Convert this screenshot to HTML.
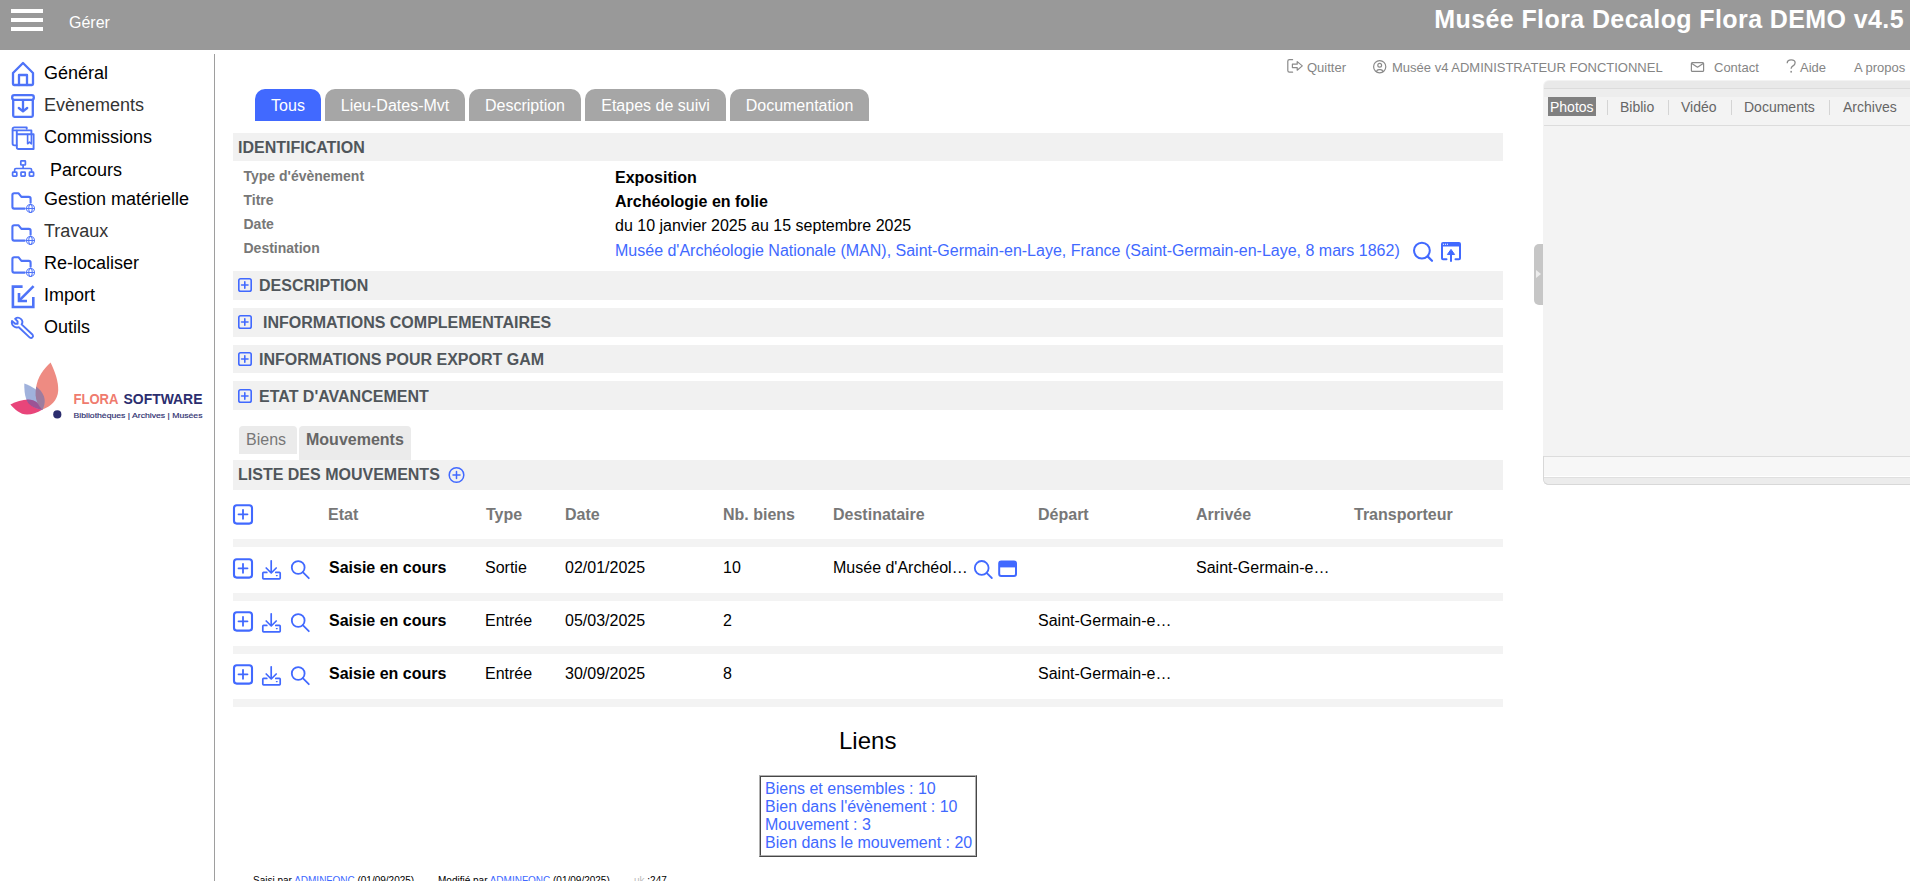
<!DOCTYPE html>
<html><head><meta charset="utf-8">
<style>
*{margin:0;padding:0;box-sizing:border-box}
html,body{width:1910px;height:881px;overflow:hidden;background:#fff;font-family:"Liberation Sans",sans-serif;position:relative}
.a{position:absolute;white-space:nowrap;line-height:1}
#hdr{position:absolute;left:0;top:0;width:1910px;height:50px;background:#999}
.bar{position:absolute;left:11px;width:32px;height:4px;background:#fff}
#gerer{left:69px;top:15px;font-size:16px;color:#fff}
#title{right:6px;top:7px;font-size:25px;font-weight:bold;color:#fff;letter-spacing:0.4px}
#vline{position:absolute;left:214px;top:54px;width:1px;height:827px;background:#9e9e9e}
.nav{position:absolute;left:44px;font-size:18px;line-height:1;color:#000;white-space:nowrap}
.toplink{position:absolute;top:61px;font-size:13px;line-height:1;color:#858585;white-space:nowrap}
.tab{position:absolute;top:89px;height:32px;border-radius:10px 10px 0 0;background:#a6a6a6;color:#fff;font-size:16px;line-height:32px;padding-top:1px;text-align:center;white-space:nowrap}
.sect{position:absolute;left:233px;width:1270px;background:#f1f1f1}
.st{position:absolute;font-size:16px;font-weight:bold;color:#50565b;line-height:1;white-space:nowrap}
.lbl{position:absolute;left:243.5px;font-size:14px;font-weight:bold;color:#777;line-height:1;white-space:nowrap}
.val{position:absolute;left:615px;font-size:16px;color:#000;line-height:1;white-space:nowrap}
.sep{position:absolute;left:233px;width:1270px;height:8px;background:#f3f3f3}
.th{position:absolute;top:507px;font-size:16px;font-weight:bold;color:#777;line-height:1;white-space:nowrap}
.td{position:absolute;font-size:16px;color:#000;line-height:1;white-space:nowrap}
.rp{position:absolute;font-size:14px;line-height:1;color:#666;white-space:nowrap}
.rsep{position:absolute;top:100px;width:1px;height:15px;background:#d4d4d4}
.lk{position:absolute;left:765px;font-size:16px;line-height:1;color:#4169ff;white-space:nowrap}
.ft{position:absolute;top:876px;font-size:10px;line-height:1;color:#000;white-space:nowrap}
.ft b{font-weight:normal;color:#4169ff}
</style></head><body>
<div id="hdr">
  <div class="bar" style="top:9px"></div>
  <div class="bar" style="top:18px"></div>
  <div class="bar" style="top:27px"></div>
  <div class="a" id="gerer">Gérer</div>
  <div class="a" id="title">Musée Flora Decalog Flora DEMO v4.5</div>
</div>
<div id="vline"></div>

<!-- sidebar -->
<div class="nav" style="top:64px">Général</div>
<div class="nav" style="top:96px;color:#333">Evènements</div>
<div class="nav" style="top:128px">Commissions</div>
<div class="nav" style="top:161px;left:50px">Parcours</div>
<div class="nav" style="top:190px">Gestion matérielle</div>
<div class="nav" style="top:222px;color:#333">Travaux</div>
<div class="nav" style="top:254px">Re-localiser</div>
<div class="nav" style="top:286px">Import</div>
<div class="nav" style="top:318px">Outils</div>

<!-- top links -->
<div class="toplink" style="left:1307px">Quitter</div>
<div class="toplink" style="left:1392px">Musée v4 ADMINISTRATEUR FONCTIONNEL</div>
<div class="toplink" style="left:1714px">Contact</div>
<div class="toplink" style="left:1800px">Aide</div>
<div class="toplink" style="left:1854px">A propos</div>

<!-- right panel -->
<div style="position:absolute;left:1543px;top:80px;width:380px;height:405px;background:#f3f3f3;border-bottom:1px solid #d8d8d8;border-radius:6px 0 0 6px"></div>
<div style="position:absolute;left:1543px;top:456px;width:12px;height:29px;border-left:1px solid #d8d8d8;border-bottom:1px solid #d8d8d8;border-radius:0 0 0 6px"></div>
<div style="position:absolute;left:1544px;top:81px;width:366px;height:7px;background:#e9e9e9;border-radius:5px 0 0 0"></div>
<div style="position:absolute;left:1544px;top:88px;width:366px;height:9px;background:#ededed;border-top:1px solid #dcdcdc"></div>
<div style="position:absolute;left:1544px;top:125px;width:366px;height:1px;background:#dcdcdc"></div>
<div style="position:absolute;left:1544px;top:456px;width:366px;height:20px;background:#f7f7f7;border-top:1px solid #dcdcdc"></div>
<div style="position:absolute;left:1544px;top:476px;width:366px;height:1px;background:#fff"></div>
<div style="position:absolute;left:1544px;top:477px;width:366px;height:7px;background:#ececec;border-top:1px solid #e0e0e0;border-radius:0 0 0 5px"></div>
<div style="position:absolute;left:1548px;top:97px;width:48px;height:19px;background:#808080"></div>
<div class="rp" style="left:1550px;top:100px;color:#fff">Photos</div>
<div class="rsep" style="left:1607px"></div>
<div class="rp" style="left:1620px;top:100px">Biblio</div>
<div class="rsep" style="left:1668px"></div>
<div class="rp" style="left:1681px;top:100px">Vidéo</div>
<div class="rsep" style="left:1731px"></div>
<div class="rp" style="left:1744px;top:100px">Documents</div>
<div class="rsep" style="left:1829px"></div>
<div class="rp" style="left:1843px;top:100px">Archives</div>
<div style="position:absolute;left:1534px;top:244px;width:9px;height:61px;background:#c6c6c6;border-radius:5px 0 0 5px"></div>
<div style="position:absolute;left:1536px;top:270px;width:0;height:0;border-left:5.5px solid #ececec;border-top:4px solid transparent;border-bottom:4px solid transparent"></div>

<!-- tabs -->
<div class="tab" style="left:255px;width:66px;background:#4169ff">Tous</div>
<div class="tab" style="left:325px;width:140px">Lieu-Dates-Mvt</div>
<div class="tab" style="left:469px;width:112px">Description</div>
<div class="tab" style="left:585px;width:141px">Etapes de suivi</div>
<div class="tab" style="left:730px;width:139px">Documentation</div>

<!-- identification -->
<div class="sect" style="top:133px;height:28px"></div>
<div class="st" style="left:238px;top:140px">IDENTIFICATION</div>
<div class="lbl" style="top:169px">Type d'évènement</div>
<div class="lbl" style="top:193px">Titre</div>
<div class="lbl" style="top:217px">Date</div>
<div class="lbl" style="top:241px">Destination</div>
<div class="val" style="top:170px;font-weight:bold">Exposition</div>
<div class="val" style="top:194px;font-weight:bold">Archéologie en folie</div>
<div class="val" style="top:218px">du 10 janvier 2025 au 15 septembre 2025</div>
<div class="val" style="top:243px;color:#4169ff">Musée d'Archéologie Nationale (MAN), Saint-Germain-en-Laye, France (Saint-Germain-en-Laye, 8 mars 1862)</div>

<div class="sect" style="top:271px;height:29px"></div>
<div class="st" style="left:259px;top:278px">DESCRIPTION</div>
<div class="sect" style="top:308px;height:29px"></div>
<div class="st" style="left:263px;top:315px">INFORMATIONS COMPLEMENTAIRES</div>
<div class="sect" style="top:345px;height:28px"></div>
<div class="st" style="left:259px;top:352px">INFORMATIONS POUR EXPORT GAM</div>
<div class="sect" style="top:381px;height:29px"></div>
<div class="st" style="left:259px;top:389px">ETAT D'AVANCEMENT</div>

<!-- sub tabs -->
<div style="position:absolute;left:239px;top:426px;width:58px;height:28px;background:#ebebeb;border-radius:4px 4px 0 0"></div>
<div class="a" style="left:246px;top:432px;font-size:16px;color:#777">Biens</div>
<div style="position:absolute;left:299px;top:426px;width:112px;height:34px;background:#ebebeb;border-radius:4px 4px 0 0"></div>
<div class="a" style="left:306px;top:432px;font-size:16px;font-weight:bold;color:#666">Mouvements</div>

<div class="sect" style="top:460px;height:30px"></div>
<div class="st" style="left:238px;top:467px">LISTE DES MOUVEMENTS</div>

<!-- table -->
<div class="th" style="left:328px">Etat</div>
<div class="th" style="left:486px">Type</div>
<div class="th" style="left:565px">Date</div>
<div class="th" style="left:723px">Nb. biens</div>
<div class="th" style="left:833px">Destinataire</div>
<div class="th" style="left:1038px">Départ</div>
<div class="th" style="left:1196px">Arrivée</div>
<div class="th" style="left:1354px">Transporteur</div>

<div class="sep" style="top:539px"></div>
<div class="sep" style="top:593px"></div>
<div class="sep" style="top:646px"></div>
<div class="sep" style="top:699px"></div>

<div class="td" style="left:329px;top:560px;font-weight:bold">Saisie en cours</div>
<div class="td" style="left:485px;top:560px">Sortie</div>
<div class="td" style="left:565px;top:560px">02/01/2025</div>
<div class="td" style="left:723px;top:560px">10</div>
<div class="td" style="left:833px;top:560px">Musée d'Archéol…</div>
<div class="td" style="left:1196px;top:560px">Saint-Germain-e…</div>

<div class="td" style="left:329px;top:613px;font-weight:bold">Saisie en cours</div>
<div class="td" style="left:485px;top:613px">Entrée</div>
<div class="td" style="left:565px;top:613px">05/03/2025</div>
<div class="td" style="left:723px;top:613px">2</div>
<div class="td" style="left:1038px;top:613px">Saint-Germain-e…</div>

<div class="td" style="left:329px;top:666px;font-weight:bold">Saisie en cours</div>
<div class="td" style="left:485px;top:666px">Entrée</div>
<div class="td" style="left:565px;top:666px">30/09/2025</div>
<div class="td" style="left:723px;top:666px">8</div>
<div class="td" style="left:1038px;top:666px">Saint-Germain-e…</div>

<!-- liens -->
<div class="a" style="left:839px;top:729px;font-size:24px;color:#000">Liens</div>
<div style="position:absolute;left:759px;top:775px;width:218px;height:82px;border:1px solid;border-color:#b0b0b0 #474747 #474747 #b0b0b0"><div style="width:216px;height:80px;border:1px solid;border-color:#474747 #b0b0b0 #b0b0b0 #474747"></div></div>
<div class="lk" style="top:781px">Biens et ensembles : 10</div>
<div class="lk" style="top:799px">Bien dans l'évènement : 10</div>
<div class="lk" style="top:817px">Mouvement : 3</div>
<div class="lk" style="top:835px">Bien dans le mouvement : 20</div>

<div class="ft" style="left:253px">Saisi par <b>ADMINFONC</b> (01/09/2025)</div>
<div class="ft" style="left:438px">Modifié par <b>ADMINFONC</b> (01/09/2025)</div>
<div class="ft" style="left:634px"><span style="color:#bbb">uk</span> :247</div>


<!-- logo -->
<svg style="position:absolute;left:0;top:350px" width="214" height="80" viewBox="0 350 214 80">
<path d="M10.4,404.4 C16,401.5 22,399.6 28.5,399.5 C35,399.6 40,403.5 42.5,409.6 C37,412.8 32,414.6 27,414.6 C20,414.3 14.5,409 10.4,404.4 Z" fill="#e8457a"/>
<path d="M50.6,362.5 C55,372 58.5,381 58.2,390.5 C57.8,400 51,406.5 42,409.7 C37,404 35,397 36,388 C37.5,377 43.5,369 50.6,362.5 Z" fill="#ee8b82"/>
<path d="M24.3,383.4 C31.5,386 39,390.5 42.8,396.5 C45,400.5 44.5,405.5 42.4,409.7 C35,409 29,405 26.2,399 C24.6,394.5 24.2,389 24.3,383.4 Z" fill="#8fa5d6" fill-opacity="0.85"/>
<path d="M26.3,399.6 C28.5,399.4 31,399.6 33,400.2 C37.5,401.8 40.5,405.2 42.4,409.7 C37.5,409.3 32,407.2 28.6,403.5 C27.6,402.3 26.9,401 26.3,399.6 Z" fill="#9b4d8f" fill-opacity="0.9"/>
<path d="M36.2,386.5 C39.3,388.8 42.2,392 43.8,396 C45.5,400.5 44.6,405.6 42.4,409.7 C38.5,406.2 36,401 35.6,395.5 C35.5,392.5 35.7,389.5 36.2,386.5 Z" fill="#9d7c9f"/>
<circle cx="57.3" cy="414.4" r="4.1" fill="#2b2d6e"/>
<text x="73.5" y="404" font-family="Liberation Sans" font-weight="bold" font-size="14" fill="#ef7b6e" textLength="45" lengthAdjust="spacingAndGlyphs">FLORA</text>
<text x="123.5" y="404" font-family="Liberation Sans" font-weight="bold" font-size="14" fill="#2b2d6e" textLength="79" lengthAdjust="spacingAndGlyphs">SOFTWARE</text>
<text x="73.5" y="417.5" font-family="Liberation Sans" font-size="7.4" fill="#2b2d6e" stroke="#2b2d6e" stroke-width="0.15" textLength="129" lengthAdjust="spacingAndGlyphs">Bibliothèques | Archives | Musées</text>
</svg>
<!-- ICONS -->
<svg style="position:absolute;left:0;top:0" width="1910" height="881" viewBox="0 0 1910 881" fill="none" stroke="#4169ff" stroke-width="2" stroke-linecap="round" stroke-linejoin="round">

<g stroke="#4e73f8"><g stroke-width="2.3"><!-- home -->
<path d="M13,84 V73 L23,63 L33,73 V84 Q33,85 32,85 H14 Q13,85 13,84 Z"/>
<path d="M19,85 V75 H27 V85"/>
<!-- archive -->
<rect x="12.2" y="95.2" width="21.6" height="4.6" rx="2"/>
<path d="M13.2,100 V115.5 Q13.2,116.8 14.5,116.8 H31.5 Q32.8,116.8 32.8,115.5 V100"/>
<path d="M23,101 V111.2 M18.8,108 L23,111.4 L27.2,108"/>
</g>
<!-- commissions -->
<g stroke-width="1.9">
<path d="M26.7,128.7 V127.4 H14.4 Q12.6,127.4 12.6,129.2 V143.6 Q12.6,145.4 14.4,145.4 H16.6"/>
<path d="M12.8,130.4 H31.4 V133.6"/>
<path d="M16.8,130.6 V147.2 Q16.8,149 18.6,149 H33.6 V134.3 H16.8"/>
<path d="M27.6,134.5 V143.8 L29.5,142.2 L31.4,143.8 V134.5" stroke-width="1.6"/>
</g>
<!-- sitemap -->
<g stroke-width="1.7">
<rect x="20.8" y="160.8" width="4.6" height="4.2" rx="0.6"/>
<path d="M23.1,165 V168.5 M14.6,172 V170 Q14.6,168.5 16,168.5 H30.2 Q31.6,168.5 31.6,170 V172"/>
<rect x="12.6" y="172.2" width="4.2" height="4" rx="0.6"/>
<rect x="21" y="172.2" width="4.2" height="4" rx="0.6"/>
<rect x="29.4" y="172.2" width="4.2" height="4" rx="0.6"/>
</g>

<g transform="translate(0,0)">
<path d="M24.8,208.6 H14.2 Q12.4,208.6 12.4,206.8 V195 Q12.4,193.2 14.2,193.2 H18.4 L21.4,196.9 H28.8 Q30.6,196.9 30.6,198.7 V202.8" stroke-width="2.1"/>
<g stroke-width="1.05"><circle cx="30.5" cy="208.4" r="4"/><ellipse cx="30.5" cy="208.4" rx="1.7" ry="4"/><path d="M26.6,208.4 H34.4"/></g>
</g>

<g transform="translate(0,32)">
<path d="M24.8,208.6 H14.2 Q12.4,208.6 12.4,206.8 V195 Q12.4,193.2 14.2,193.2 H18.4 L21.4,196.9 H28.8 Q30.6,196.9 30.6,198.7 V202.8" stroke-width="2.1"/>
<g stroke-width="1.05"><circle cx="30.5" cy="208.4" r="4"/><ellipse cx="30.5" cy="208.4" rx="1.7" ry="4"/><path d="M26.6,208.4 H34.4"/></g>
</g>

<g transform="translate(0,64)">
<path d="M24.8,208.6 H14.2 Q12.4,208.6 12.4,206.8 V195 Q12.4,193.2 14.2,193.2 H18.4 L21.4,196.9 H28.8 Q30.6,196.9 30.6,198.7 V202.8" stroke-width="2.1"/>
<g stroke-width="1.05"><circle cx="30.5" cy="208.4" r="4"/><ellipse cx="30.5" cy="208.4" rx="1.7" ry="4"/><path d="M26.6,208.4 H34.4"/></g>
</g>

<!-- import -->
<g stroke-width="2.6" stroke-linecap="butt" stroke-linejoin="miter">
<path d="M22.6,286.6 H12.9 V307 H33.3 V297"/>
<path d="M33.6,286.2 L19.4,300.4"/>
<path d="M19,293 V301 H27"/>
</g>
<!-- wrench -->
<path stroke-width="1.9" d="M15.2,318.8 A4.3,4.3 0 0 1 21.6,324.4 L32.6,334.8 A2,2 0 0 1 29.8,337.6 L18.8,327.2 A5.2,5.2 0 0 1 12,321 L15.2,323.8 H17.6 V321.4 Z"/>

</g>
<!-- section plus squares -->
<g stroke-width="1.6"><rect x="238.8" y="278.8" width="12.4" height="12.4" rx="1.8"/><path d="M241.6,285 H248 M244.8,281.8 V288.2"/></g>
<g stroke-width="1.6"><rect x="238.8" y="315.8" width="12.4" height="12.4" rx="1.8"/><path d="M241.6,322 H248 M244.8,318.8 V325.2"/></g>
<g stroke-width="1.6"><rect x="238.8" y="352.8" width="12.4" height="12.4" rx="1.8"/><path d="M241.6,359 H248 M244.8,355.8 V362.2"/></g>
<g stroke-width="1.6"><rect x="238.8" y="389.8" width="12.4" height="12.4" rx="1.8"/><path d="M241.6,396 H248 M244.8,392.8 V399.2"/></g>

<!-- liste plus circle -->
<g stroke-width="1.5"><circle cx="456.5" cy="475" r="7.3"/><path d="M453,475 H460 M456.5,471.5 V478.5"/></g>
<!-- destination icons -->
<circle cx="1421.9" cy="250.6" r="7.9" stroke-width="2"/>
<path d="M1427.6,256.4 L1432,260.8" stroke-width="2.2"/>
<g stroke-width="2">
<path d="M1446.5,259.3 H1443 Q1442,259.3 1442,258.3 V244 Q1442,243 1443,243 H1459 Q1460,243 1460,244 V258.3 Q1460,259.3 1459,259.3 H1455.5"/>
<path d="M1443,244.8 H1459" stroke-width="3.4" stroke-linecap="butt"/>
<path d="M1451,261 V253"/>
<path d="M1447.6,254.2 L1451,249.4 L1454.4,254.2 Z" fill="#4169ff" stroke-width="1"/>
</g>
<g stroke="#fff" stroke-width="1.1" stroke-linecap="butt"><path d="M1442.9,244.3 H1444 M1444.9,244.3 H1446 M1446.9,244.3 H1448"/></g>
<g><rect x="234" y="505.3" width="18" height="18.3" rx="2.8" stroke-width="2.1"/><path d="M238.5,514.3 H247.5 M243,509.8 V518.8" stroke-width="1.8"/></g>
<g><rect x="234" y="559.3" width="18" height="18.3" rx="2.8" stroke-width="2.1"/><path d="M238.5,568.3 H247.5 M243,563.8 V572.8" stroke-width="1.8"/></g>
<g><rect x="234" y="612.3" width="18" height="18.3" rx="2.8" stroke-width="2.1"/><path d="M238.5,621.3 H247.5 M243,616.8 V625.8" stroke-width="1.8"/></g>
<g><rect x="234" y="665.3" width="18" height="18.3" rx="2.8" stroke-width="2.1"/><path d="M238.5,674.3 H247.5 M243,669.8 V678.8" stroke-width="1.8"/></g>
<g transform="translate(0,0)" stroke-width="1.7">
<path d="M271.2,560.8 V572.8 M266.2,568 L271.2,573 L276.2,568"/>
<path d="M266.8,572.4 H263.6 Q262.8,572.4 262.8,573.2 V578 Q262.8,578.8 263.6,578.8 H279.4 Q280.2,578.8 280.2,578 V573.2 Q280.2,572.4 279.4,572.4 H275.8"/>
<path d="M276.4,575.6 H277.2" stroke-width="1.2"/>
<circle cx="298.2" cy="567.5" r="6.4" stroke-width="1.8"/>
<path d="M302.8,572.2 L308.8,578.2" stroke-width="1.8"/>
</g>
<g transform="translate(0,53)" stroke-width="1.7">
<path d="M271.2,560.8 V572.8 M266.2,568 L271.2,573 L276.2,568"/>
<path d="M266.8,572.4 H263.6 Q262.8,572.4 262.8,573.2 V578 Q262.8,578.8 263.6,578.8 H279.4 Q280.2,578.8 280.2,578 V573.2 Q280.2,572.4 279.4,572.4 H275.8"/>
<path d="M276.4,575.6 H277.2" stroke-width="1.2"/>
<circle cx="298.2" cy="567.5" r="6.4" stroke-width="1.8"/>
<path d="M302.8,572.2 L308.8,578.2" stroke-width="1.8"/>
</g>
<g transform="translate(0,106)" stroke-width="1.7">
<path d="M271.2,560.8 V572.8 M266.2,568 L271.2,573 L276.2,568"/>
<path d="M266.8,572.4 H263.6 Q262.8,572.4 262.8,573.2 V578 Q262.8,578.8 263.6,578.8 H279.4 Q280.2,578.8 280.2,578 V573.2 Q280.2,572.4 279.4,572.4 H275.8"/>
<path d="M276.4,575.6 H277.2" stroke-width="1.2"/>
<circle cx="298.2" cy="567.5" r="6.4" stroke-width="1.8"/>
<path d="M302.8,572.2 L308.8,578.2" stroke-width="1.8"/>
</g>

<!-- destinataire icons -->
<circle cx="981.7" cy="567.9" r="6.9" stroke-width="1.8"/>
<path d="M986.6,572.8 L991.8,578" stroke-width="1.8"/>
<rect x="999.2" y="561.4" width="16.8" height="14.6" rx="2" stroke-width="2"/>
<rect x="999.2" y="561.4" width="16.8" height="6" fill="#4169ff" stroke="none"/>

<!-- toplink icons -->
<g stroke="#8a8a8a" stroke-width="1.2">
<path d="M1292.6,59.7 H1289.4 Q1287.8,59.7 1287.8,61.3 V70.6 Q1287.8,72.2 1289.4,72.2 H1292.6"/>
<path d="M1292.4,64.2 H1297.2 V61.6 L1302.3,65.9 L1297.2,70.2 V67.6 H1292.4 Z"/>
<circle cx="1379.7" cy="66.7" r="6.1"/>
<circle cx="1379.7" cy="65.2" r="1.9"/>
<path d="M1376.4,71.6 Q1377,69.6 1379,69.6 H1380.4 Q1382.4,69.6 1383,71.6"/>
<rect x="1691.4" y="62.6" width="12.2" height="8.8" rx="1"/>
<path d="M1691.8,63.4 L1697.5,67.2 L1703.2,63.4"/>
</g>
<path d="M1787.2,63.2 Q1787.2,59.8 1791.2,59.8 Q1795.1,59.8 1795.1,62.8 Q1795.1,64.7 1793,65.9 Q1791.1,67 1791.1,68.8" stroke="#8a8a8a" stroke-width="1.3" stroke-linecap="butt"/><rect x="1790.4" y="70.9" width="1.5" height="1.7" fill="#8a8a8a" stroke="none"/>
</svg>
</body></html>
